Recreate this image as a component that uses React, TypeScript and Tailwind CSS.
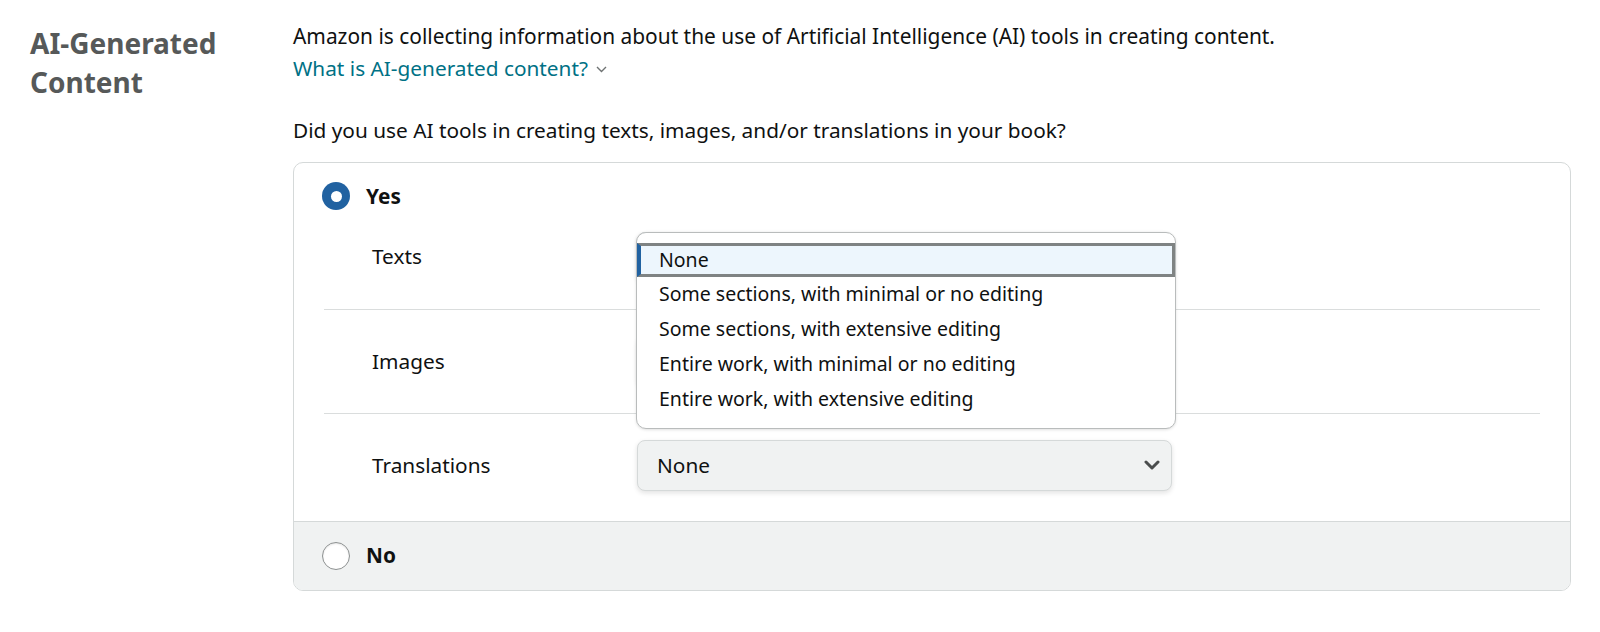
import { useState } from "react";

const OPTIONS = [
  "None",
  "Some sections, with minimal or no editing",
  "Some sections, with extensive editing",
  "Entire work, with minimal or no editing",
  "Entire work, with extensive editing"
];

function Chevron() {
  return (
    <svg width="16" height="11" viewBox="0 0 16 11" className="shrink-0">
      <path d="M2 2 L8 8 L14 2" fill="none" stroke="#4a4d4d" strokeWidth="3" strokeLinecap="round" strokeLinejoin="round" />
    </svg>
  );
}

// covered: the open listbox sits on top of it, so its value is not seen
function SelectBox({ value, open, covered }: { value: string; open?: boolean; covered?: boolean }) {
  return (
    <div className="relative w-[535px]">
      <div className="flex h-[51px] items-center justify-between rounded-[8px] border border-[#d5d9d9] bg-[#f0f2f2] pl-[19px] pr-[11px] text-[20.8px] text-[#0f1111] shadow-[0_2px_5px_rgba(15,17,17,0.12)]">
        <span className={open || covered ? "invisible" : ""}>{value}</span>
        <Chevron />
      </div>
      {open && (
        <div className="absolute left-[-1px] top-0 z-10 h-[197px] w-[540px] rounded-[10px] border border-[#b9bcbc] bg-white pt-[10px] shadow-[0_1px_3px_rgba(0,0,0,0.12)]">
          {OPTIONS.map((o, i) =>
            i === 0 ? (
              <div
                key={o}
                className="flex h-[34px] items-center border-y-[3px] border-r-[3px] border-l-[4px] border-y-[#7f8383] border-r-[#7f8383] border-l-[#2162a1] bg-[#edf6fd] pl-[18px] text-[19.5px] text-[#0f1111]"
              >
                {o}
              </div>
            ) : (
              <div key={o} className="flex h-[34.8px] items-center pl-[22px] text-[19.5px] text-[#0f1111]">
                {o}
              </div>
            )
          )}
        </div>
      )}
    </div>
  );
}

function Row({ label, children, first }: { label: string; children: React.ReactNode; first?: boolean }) {
  return (
    <div className={`flex h-[104px] items-center ${first ? "" : "border-t border-[#dadddd]"}`}>
      <div className="w-[313px] pl-[48px] text-[20.8px] text-[#0f1111]">{label}</div>
      {children}
    </div>
  );
}

export default function App() {
  const [choice, setChoice] = useState<"yes" | "no">("yes");
  const open = choice === "yes";

  return (
    <div className="flex min-h-[632px] w-full bg-white pl-[30px] pr-[29px] font-['Noto_Sans',sans-serif] text-[#0f1111]">
      <div className="w-[263px] shrink-0 pt-[24px]">
        <h2 className="text-[28px] font-bold leading-[39px] text-[#565959]">
          AI-Generated
          <br />
          Content
        </h2>
      </div>

      <div className="flex-1 pt-[20px]">
        <p className="text-[20.9px] leading-[32px]">
          Amazon is collecting information about the use of Artificial Intelligence (AI) tools in creating content.
        </p>
        <a className="flex items-center gap-[8px] text-[20.8px] leading-[32px] text-[#007185]">
          What is AI-generated content?
          <svg width="11" height="7" viewBox="0 0 11 7" className="mt-[3px]">
            <path d="M1 1 L5.5 5.5 L10 1" fill="none" stroke="#6f7373" strokeWidth="1.4" />
          </svg>
        </a>
        <p className="mt-[30px] text-[20.8px] leading-[32px]">
          Did you use AI tools in creating texts, images, and/or translations in your book?
        </p>

        <div className="mt-[16px] overflow-hidden rounded-[10px] border border-[#d5d9d9]">
          <div className="pb-[4px]">
            <button
              onClick={() => setChoice("yes")}
              className="flex h-[42px] items-start gap-[16px] pl-[28px] pt-[19px]"
            >
              <span className="flex h-[28px] w-[28px] items-center justify-center rounded-full bg-[#2162a1]">
                <span className="h-[11px] w-[11px] rounded-full bg-white" />
              </span>
              <span className="text-[20.8px] font-bold leading-[28px]">Yes</span>
            </button>
            <div className="mx-[30px]">
              <Row label="Texts" first>
                <SelectBox value="None" open={open} />
              </Row>
              <Row label="Images">
                <SelectBox value="None" covered={open} />
              </Row>
              <Row label="Translations">
                <SelectBox value="None" />
              </Row>
            </div>
          </div>
          <button
            onClick={() => setChoice("no")}
            className="flex h-[69px] w-full items-center gap-[16px] border-t border-[#d5d9d9] bg-[#f0f2f2] pl-[28px]"
          >
            <span className="h-[28px] w-[28px] rounded-full border border-[#8d9191] bg-white shadow-[inset_0_1px_2px_rgba(0,0,0,0.1)]" />
            <span className="text-[20.8px] font-bold">No</span>
          </button>
        </div>
      </div>
    </div>
  );
}
